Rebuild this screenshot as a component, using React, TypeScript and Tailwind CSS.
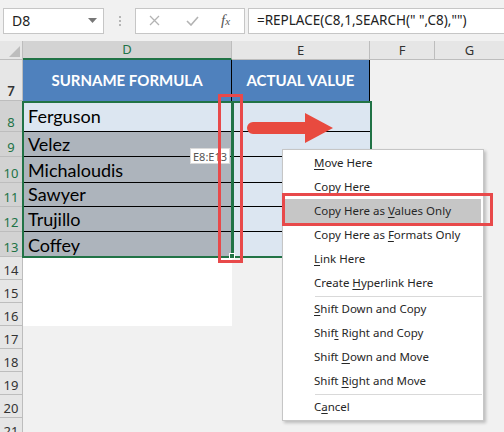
import React from 'react';

const bodyRows = [
  { n: 8, h: 'h-[31px]', text: 'Ferguson', bg: 'bg-[#dce6f1]' },
  { n: 9, h: 'h-[25px]', text: 'Velez', bg: 'bg-[#adb4bc]' },
  { n: 10, h: 'h-[26px]', text: 'Michaloudis', bg: 'bg-[#adb4bc]' },
  { n: 11, h: 'h-[24px]', text: 'Sawyer', bg: 'bg-[#adb4bc]' },
  { n: 12, h: 'h-[25px]', text: 'Trujillo', bg: 'bg-[#adb4bc]' },
  { n: 13, h: 'h-[25px]', text: 'Coffey', bg: 'bg-[#adb4bc]' },
];

const emptyRows = [14, 15, 16, 17, 18, 19, 20, 21];

type Item = { pre: string; key: string; post: string; active?: boolean } | 'sep';

const menu: Item[] = [
  { pre: '', key: 'M', post: 'ove Here' },
  { pre: '', key: 'C', post: 'opy Here' },
  { pre: 'Copy Here as ', key: 'V', post: 'alues Only', active: true },
  { pre: 'Copy Here as ', key: 'F', post: 'ormats Only' },
  { pre: '', key: 'L', post: 'ink Here' },
  { pre: 'Create ', key: 'H', post: 'yperlink Here' },
  'sep',
  { pre: '', key: 'S', post: 'hift Down and Copy' },
  { pre: 'Shif', key: 't', post: ' Right and Copy' },
  { pre: 'Shift ', key: 'D', post: 'own and Move' },
  { pre: 'Shift ', key: 'R', post: 'ight and Move' },
  'sep',
  { pre: 'C', key: 'a', post: 'ncel' },
];

const RowHead = ({ n, selected }: { n: number; selected?: boolean }) => (
  <div
    className={`w-[23px] shrink-0 flex items-end justify-center pb-[2px] border-r border-b border-[#bdbdbd] text-[13px] leading-none ${
      selected ? 'bg-[#d2d2d2] text-[#217346]' : 'bg-[#e6e6e6] text-[#333]'
    }`}
  >
    {n}
  </div>
);

const FormulaBar = () => (
  <div className="h-[41px] flex items-center pl-[3px] font-['Noto_Sans',sans-serif]">
    <div className="w-[101px] h-[26px] bg-white border border-[#c6c6c6] flex items-center justify-between pl-[8px] pr-[6px] text-[14px] text-[#222]">
      <span>D8</span>
      <svg width="9" height="5" viewBox="0 0 9 5">
        <path d="M0 0h9L4.5 5z" fill="#777" />
      </svg>
    </div>
    <div className="w-[31px] flex flex-col items-center gap-[2px]">
      <span className="w-[2px] h-[2px] bg-[#b5b5b5]" />
      <span className="w-[2px] h-[2px] bg-[#b5b5b5]" />
      <span className="w-[2px] h-[2px] bg-[#b5b5b5]" />
    </div>
    <div className="w-[110px] h-[26px] bg-white border border-[#c6c6c6] flex items-center">
      <svg className="ml-[13px]" width="11" height="11" viewBox="0 0 11 11">
        <path d="M1 1l9 9M10 1l-9 9" stroke="#b3b3b3" strokeWidth="1.3" />
      </svg>
      <svg className="ml-[26px]" width="13" height="10" viewBox="0 0 13 10">
        <path d="M1 5l4 4 7-8" stroke="#b3b3b3" strokeWidth="1.6" fill="none" />
      </svg>
      <span className="ml-[22px] font-['Liberation_Serif',serif] italic text-[15px] text-[#555] leading-none">
        f<span className="text-[11px]">x</span>
      </span>
    </div>
    <div className="ml-[3px] flex-1 h-[26px] bg-white border-y border-l border-[#c6c6c6] flex items-center pl-[8px] text-[13.5px] text-[#222] whitespace-nowrap">
      {'=REPLACE(C8,1,SEARCH(" ",C8),"")'}
    </div>
  </div>
);

const ColumnHeads = () => (
  <div className="flex h-[19px] text-[13px] font-['Noto_Sans',sans-serif] leading-none">
    <div className="w-[23px] shrink-0 bg-[#e6e6e6] border-r border-b border-[#bdbdbd] flex items-end justify-end p-[2px]">
      <svg width="11" height="11" viewBox="0 0 11 11">
        <path d="M11 0v11H0z" fill="#bdbdbd" />
      </svg>
    </div>
    <div className="w-[209px] shrink-0 bg-[#d3d3d3] border-r border-[#bdbdbd] border-b-2 border-b-[#217346] flex items-center justify-center text-[#217346]">
      D
    </div>
    <div className="w-[138px] shrink-0 bg-[#e6e6e6] border-r border-b border-[#bdbdbd] flex items-center justify-center text-[#333]">
      E
    </div>
    <div className="w-[65px] shrink-0 bg-[#e6e6e6] border-r border-b border-[#bdbdbd] flex items-center justify-center text-[#333]">
      F
    </div>
    <div className="flex-1 bg-[#e6e6e6] border-b border-[#bdbdbd] flex items-center justify-center text-[#333]">
      G
    </div>
  </div>
);

const ContextMenu = () => (
  <div className="absolute left-[282px] top-[149px] w-[202px] bg-white border border-[#c6c6c6] shadow-[2px_2px_3px_rgba(0,0,0,0.22)] pt-[1px] pb-[1px] font-['Noto_Sans',sans-serif] text-[11.5px] text-[#262626]">
    {menu.map((it, i) =>
      it === 'sep' ? (
        <div key={i} className="h-[2px] flex items-center pl-[32px] pr-[1px]">
          <div className="h-px w-full bg-[#d9d9d9]" />
        </div>
      ) : (
        <div
          key={i}
          className={`h-[24px] flex items-center pl-[31px] mr-[2px] ${it.active ? 'bg-[#c6c6c6]' : ''}`}
        >
          <span className="whitespace-pre">
            {it.pre}
            <span className="underline underline-offset-2">{it.key}</span>
            {it.post}
          </span>
        </div>
      )
    )}
  </div>
);

export default function App() {
  return (
    <div className="relative w-[504px] h-[432px] overflow-hidden bg-[#f1f1f1]">
      <FormulaBar />
      <ColumnHeads />

      {/* header row 7 */}
      <div className="flex h-[41px] font-['Lato',sans-serif] font-bold text-[15px] text-white">
        <RowHead n={7} />
        <div className="w-[209px] shrink-0 bg-[#4f81bd] border-r border-black flex items-center justify-center">
          SURNAME FORMULA
        </div>
        <div className="w-[138px] shrink-0 bg-[#4f81bd] border-r border-black flex items-center justify-center">
          ACTUAL VALUE
        </div>
      </div>

      {bodyRows.map((r, i) => (
        <div key={r.n} className={`flex ${r.h}`}>
          <RowHead n={r.n} selected />
          <div
            className={`w-[209px] shrink-0 ${r.bg} ${i < 5 ? 'border-b border-black' : ''} flex items-end pl-[5px] pb-[1px] font-['Lato',sans-serif] text-[18px] leading-[22px] text-black ${i === 0 ? 'pb-[4px]' : ''}`}
          >
            {r.text}
          </div>
          <div className={`w-[138px] shrink-0 bg-[#dce6f1] ${i < 5 ? 'border-b border-black' : ''}`} />
        </div>
      ))}

      {emptyRows.map((n) => (
        <div key={n} className="flex h-[23px]">
          <RowHead n={n} />
          <div className={`w-[209px] shrink-0 ${n <= 16 ? 'bg-white' : ''}`} />
        </div>
      ))}

      {/* selection D8:D13 */}
      <div className="absolute left-[22px] top-[101px] w-[212px] h-[157px] border-2 border-[#217346]" />
      {/* drag target E8:E13 */}
      <div className="absolute left-[231px] top-[101px] w-[141px] h-[157px] border-2 border-[#217346]" />
      <div className="absolute left-[229px] top-[253px] w-[6px] h-[6px] bg-[#217346] border border-white" />

      {/* drag tooltip */}
      <div className="absolute left-[190px] top-[148px] h-[16px] px-[2px] bg-white border border-[#dadada] flex items-center font-['Noto_Sans',sans-serif] text-[11px] text-[#555] leading-none">
        E8:E13
      </div>

      {/* red annotation around column edge */}
      <div className="absolute left-[218px] top-[94px] w-[25px] h-[169px] border-[3px] border-[#e8494a]" />

      {/* red arrow */}
      <svg className="absolute left-[244px] top-[110px]" width="94" height="36" viewBox="0 0 94 36">
        <path d="M9 12h52V3l28 15-28 15v-9H9a6 6 0 0 1 0-12z" fill="#e84a3f" />
      </svg>

      <ContextMenu />

      {/* red annotation around menu item */}
      <div className="absolute left-[282px] top-[193px] w-[211px] h-[33px] border-[3px] border-[#e8494a]" />
    </div>
  );
}
